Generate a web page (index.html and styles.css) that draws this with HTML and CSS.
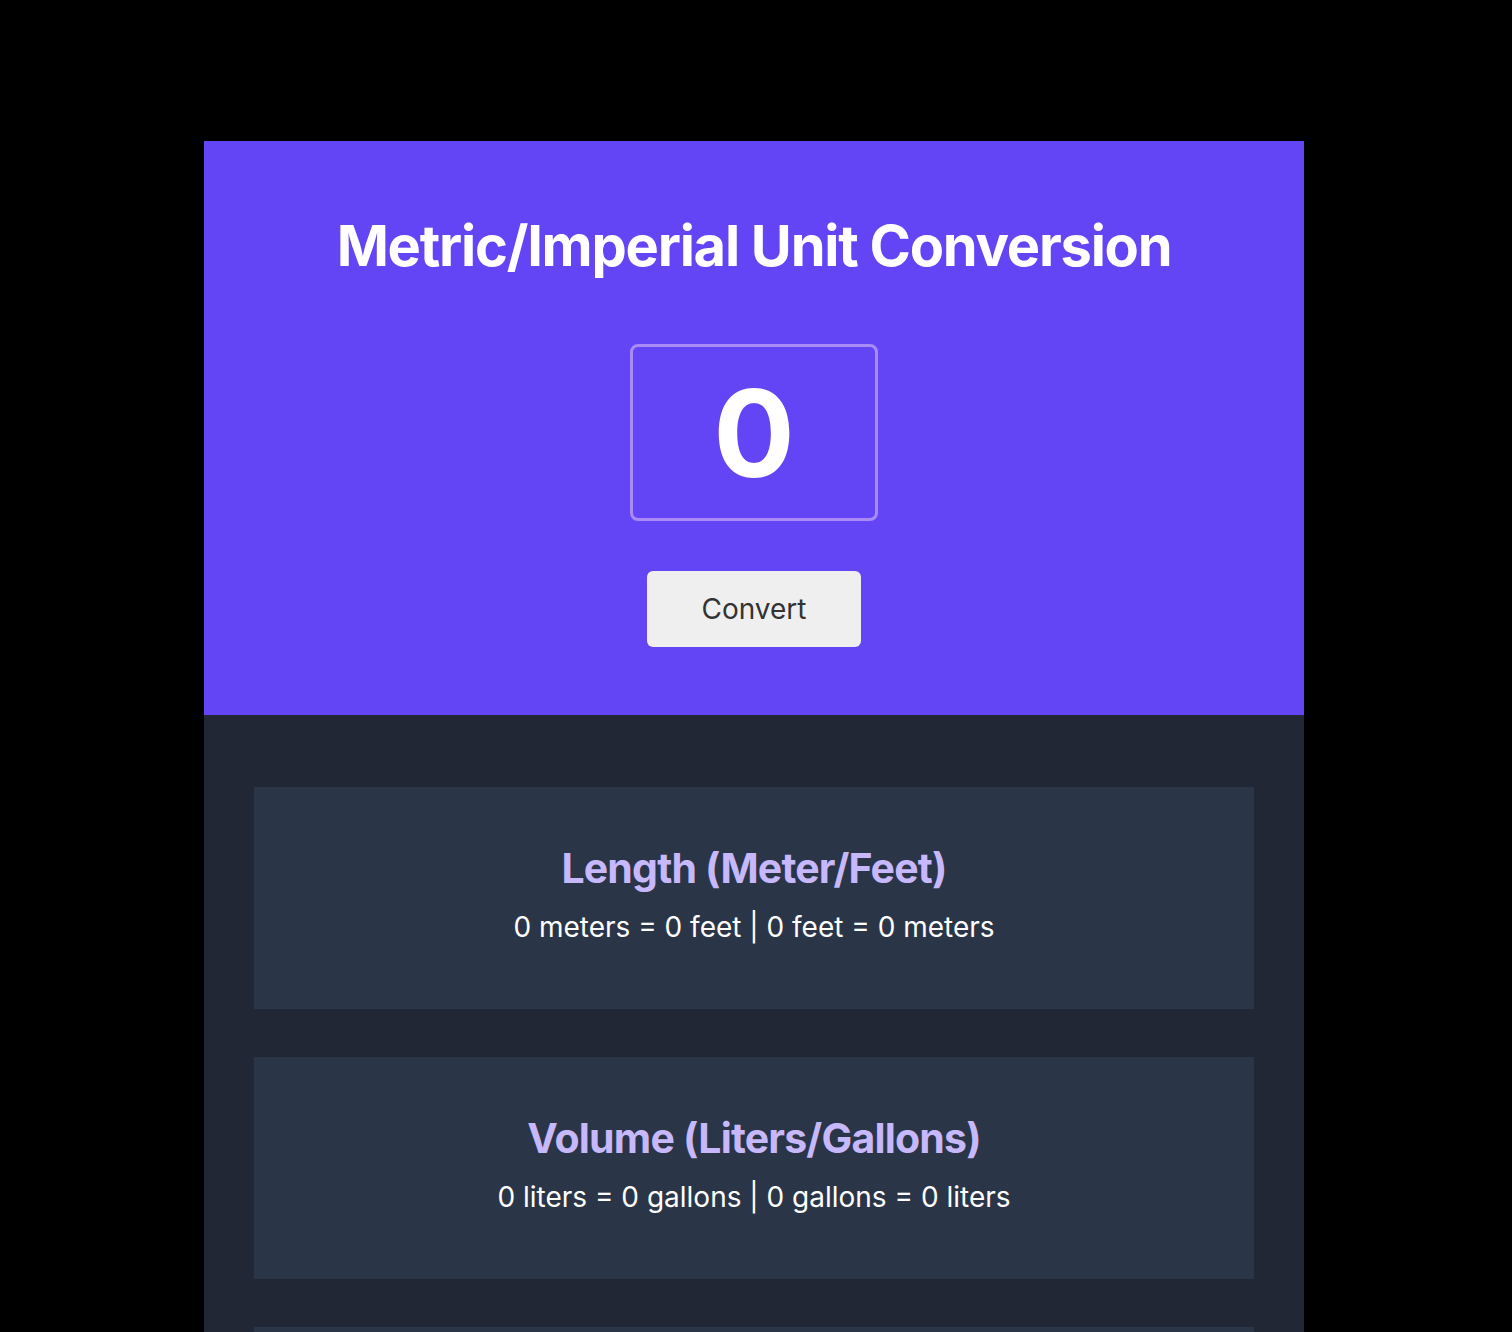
FILE: index.html
```html
<!DOCTYPE html>
<html lang="en">
<head>
<meta charset="utf-8">
<title>Unit Conversion</title>
<link rel="stylesheet" href="styles.css">
</head>
<body>
<main class="app">
  <section class="hero">
    <h1 class="hero-title">Metric/Imperial Unit Conversion</h1>
    <input class="hero-input" type="text" value="0" aria-label="Value">
    <button class="hero-button" type="button">Convert</button>
  </section>
  <section class="results">
    <div class="card">
      <h2 class="card-title">Length (Meter/Feet)</h2>
      <p class="card-text">0 meters = 0 feet | 0 feet = 0 meters</p>
    </div>
    <div class="card">
      <h2 class="card-title">Volume (Liters/Gallons)</h2>
      <p class="card-text">0 liters = 0 gallons | 0 gallons = 0 liters</p>
    </div>
    <div class="card card-partial"></div>
  </section>
</main>
</body>
</html>
```

FILE: styles.css
```css
html, body {
  margin: 0;
  padding: 0;
  background: #000;
}
body {
  font-family: Inter, "Noto Sans", sans-serif;
  padding: 141px 4px 0 0;
}
.app {
  width: 1100px;
  margin: 0 auto;
}
.hero {
  background: #6445F5;
  height: 574px;
  box-sizing: border-box;
  padding-top: 70px;
  display: flex;
  flex-direction: column;
  align-items: center;
}
.hero-title {
  margin: 0;
  color: #fff;
  font-size: 56px;
  font-weight: 700;
  letter-spacing: -0.022em;
  line-height: 70px;
}
.hero-input {
  margin-top: 63px;
  width: 248px;
  height: 177px;
  box-sizing: border-box;
  border: 3px solid #A98BF6;
  border-radius: 8px;
  background: transparent;
  color: #fff;
  font-family: Inter, sans-serif;
  font-size: 121px;
  font-weight: 700;
  text-align: center;
  padding: 0;
  outline: none;
}
.hero-button {
  margin-top: 50px;
  width: 214px;
  height: 76px;
  border: none;
  border-radius: 6px;
  background: #EFEFEF;
  color: #333;
  font-family: Inter, sans-serif;
  font-size: 28px;
  font-weight: 400;
  padding: 0;
}
.results {
  background: #212735;
  padding: 72px 50px 0;
  display: flex;
  flex-direction: column;
  gap: 48px;
}
.card {
  background: #2B3548;
  height: 222px;
  box-sizing: border-box;
  padding-top: 57px;
  text-align: center;
}
.card-title {
  margin: 0;
  color: #C6B8FB;
  font-size: 41px;
  font-weight: 700;
  letter-spacing: -0.02em;
  line-height: 48px;
}
.card-text {
  margin: 17px 0 0;
  color: #fff;
  font-size: 28px;
  line-height: 36px;
}
```
